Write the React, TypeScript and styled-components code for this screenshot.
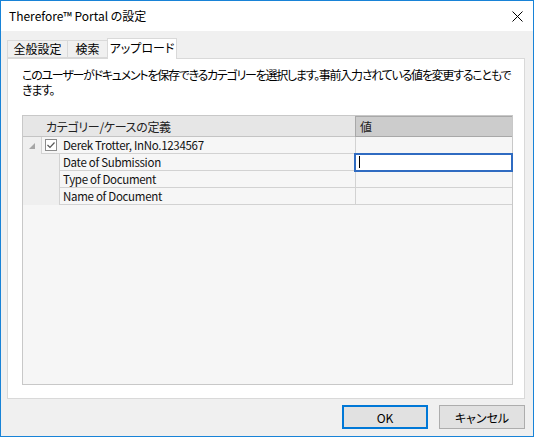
import styled, { createGlobalStyle } from 'styled-components';

const GlobalStyle = createGlobalStyle`
  html, body {
    margin: 0;
    padding: 0;
    background: #fff;
  }
`;

const font = `"Noto Sans CJK JP", "Noto Sans", sans-serif`;

const Window = styled('div')`
  width: 534px;
  height: 437px;
  box-sizing: border-box;
  border: 1px solid #1883d7;
  background: #f0f0f0;
  display: flex;
  flex-direction: column;
  font-family: ${font};
  font-size: 12px;
  color: #000;
  font-feature-settings: 'palt';
`;

const TitleBar = styled('div')`
  height: 30px;
  background: #fff;
  display: flex;
  align-items: center;
  justify-content: space-between;
  padding-left: 8px;
`;

const Title = styled('div')`
  font-size: 12px;
  line-height: 16px;
`;

const Close = styled('div')`
  width: 32px;
  height: 30px;
  display: flex;
  align-items: center;
  justify-content: center;
`;

const Body = styled('div')`
  flex: 1;
  display: flex;
  flex-direction: column;
  padding: 7px 8px 7px 6px;
`;

const TabRow = styled('div')`
  height: 20px;
  display: flex;
  align-items: flex-end;
  padding-left: 1px;
  position: relative;
  z-index: 1;
`;

const Tab = styled('div')<{ $w: number; $active?: boolean }>`
  width: ${(p) => p.$w}px;
  box-sizing: border-box;
  height: ${(p) => (p.$active ? 21 : 18)}px;
  margin-left: -1px;
  margin-bottom: ${(p) => (p.$active ? -1 : 0)}px;
  border: 1px solid #d9d9d9;
  border-bottom: ${(p) => (p.$active ? 'none' : '1px solid #d9d9d9')};
  background: ${(p) => (p.$active ? '#fff' : '#f0f0f0')};
  display: flex;
  align-items: center;
  justify-content: center;
  line-height: 14px;
  padding-bottom: ${(p) => (p.$active ? 3 : 0)}px;
`;

const Panel = styled('div')`
  flex: 1;
  background: #fff;
  border: 1px solid #d9d9d9;
  display: flex;
  flex-direction: column;
  padding: 8px 11px 13px 14px;
`;

const Description = styled('div')`
  line-height: 15px;
  letter-spacing: -1.25px;
  white-space: nowrap;
  margin-bottom: 18px;
`;

const Grid = styled('div')`
  flex: 1;
  border: 1px solid #c8c8c8;
  background: #f6f6f6;
  display: grid;
  grid-template-columns: 18px 18px 1fr 157px;
  grid-auto-rows: 17px;
  grid-template-rows: 21px;
  align-content: start;
`;

const HeadName = styled('div')`
  grid-column: 1 / 4;
  background: #e6e6e6;
  border-bottom: 1px solid #c4c4c4;
  display: flex;
  align-items: center;
  padding-left: 23px;
  color: #222;
  letter-spacing: -0.3px;
`;

const HeadValue = styled('div')`
  background: #cccccc;
  border: 1px solid #a8a8a8;
  border-right: none;
  display: flex;
  align-items: center;
  padding-left: 4px;
  color: #222;
`;

const Gutter = styled('div')`
  background: #efefef;
  display: flex;
  align-items: center;
  justify-content: center;
`;

const Indent = styled('div')`
  background: #efefef;
`;

const Cell = styled('div')<{ $span?: boolean }>`
  grid-column: ${(p) => (p.$span ? '2 / 4' : 'auto')};
  border-left: 1px solid #d2d2d2;
  border-bottom: 1px solid #d2d2d2;
  display: flex;
  align-items: center;
  gap: 6px;
  padding-left: 3px;
  color: #111;
  font-size: 11.5px;
  letter-spacing: -0.3px;
  line-height: 14px;
  white-space: nowrap;
`;

const ValueCell = styled('div')<{ $editing?: boolean }>`
  border-left: 1px solid #d2d2d2;
  border-bottom: 1px solid #d2d2d2;
  position: relative;
  display: flex;
  align-items: center;
  padding-left: 3px;
  ${(p) =>
    p.$editing &&
    `
    outline: 2px solid #2f6bc1;
    outline-offset: -1px;
    background: #fff;
    z-index: 1;
  `}
`;

const Caret = styled('span')`
  width: 1px;
  height: 12px;
  background: #000;
`;

const Footer = styled('div')`
  display: flex;
  justify-content: flex-end;
  gap: 11px;
  padding-top: 6px;
`;

const Button = styled('button')<{ $primary?: boolean }>`
  width: 86px;
  height: 24px;
  box-sizing: border-box;
  background: #e1e1e1;
  border: ${(p) => (p.$primary ? '2px solid #0078d7' : '1px solid #adadad')};
  font-family: ${font};
  font-size: 12px;
  color: #000;
  padding: 0;
  font-feature-settings: 'palt';
`;

const rows = ['Date of Submission', 'Type of Document', 'Name of Document'];

const App = () => {
  return (
    <>
      <GlobalStyle />
      <Window>
        <TitleBar>
          <Title>Therefore™ Portal の設定</Title>
          <Close>
            <svg width="11" height="11" viewBox="0 0 11 11">
              <path d="M0.5 0.5 L10.5 10.5 M10.5 0.5 L0.5 10.5" stroke="#000" strokeWidth="1" />
            </svg>
          </Close>
        </TitleBar>
        <Body>
          <TabRow>
            <Tab $w={61}>全般設定</Tab>
            <Tab $w={41}>検索</Tab>
            <Tab $w={70} $active>
              アップロード
            </Tab>
          </TabRow>
          <Panel>
            <Description>
              このユーザーがドキュメントを保存できるカテゴリーを選択します。事前入力されている値を変更することもで
              <br />
              きます。
            </Description>
            <Grid>
              <HeadName>カテゴリー/ケースの定義</HeadName>
              <HeadValue>値</HeadValue>
              <Gutter>
                <svg width="6" height="6" viewBox="0 0 6 6">
                  <path d="M6 0 L6 6 L0 6 Z" fill="#a6a6a6" />
                </svg>
              </Gutter>
              <Cell $span>
                <svg width="12" height="12" viewBox="0 0 12 12">
                  <rect x="0.5" y="0.5" width="11" height="11" fill="#fff" stroke="#8c8c8c" />
                  <path d="M2.5 6 L5 8.5 L9.5 3.5" fill="none" stroke="#555" strokeWidth="1.2" />
                </svg>
                Derek Trotter, InNo.1234567
              </Cell>
              <ValueCell />
              {rows.map((r, i) => (
                <>
                  <Gutter key={r + 'g'} />
                  <Indent key={r + 'i'} />
                  <Cell key={r}>{r}</Cell>
                  <ValueCell key={r + 'v'} $editing={i === 0}>
                    {i === 0 && <Caret />}
                  </ValueCell>
                </>
              ))}
            </Grid>
          </Panel>
          <Footer>
            <Button $primary>OK</Button>
            <Button>キャンセル</Button>
          </Footer>
        </Body>
      </Window>
    </>
  );
};

export default App;
